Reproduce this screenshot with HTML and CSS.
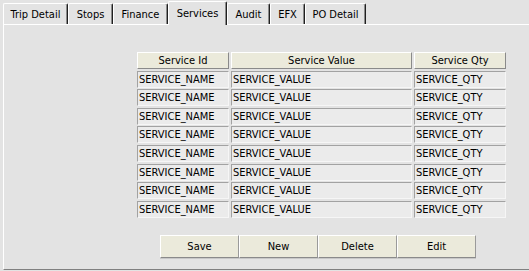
FILE: index.html
```html
<!DOCTYPE html>
<html>
<head>
<meta charset="utf-8">
<link rel="stylesheet" href="styles.css">
</head>
<body>
<div class="tabs">
  <div class="tab w-trip">Trip Detail</div>
  <div class="tab w-stops">Stops</div>
  <div class="tab w-fin">Finance</div>
  <div class="tab w-serv active">Services</div>
  <div class="tab w-audit">Audit</div>
  <div class="tab w-efx">EFX</div>
  <div class="tab w-po">PO Detail</div>
</div>
<div class="panel">
  <div class="grid">
    <div class="hd">Service Id</div>
    <div class="hd">Service Value</div>
    <div class="hd">Service Qty</div>
    <div class="cell">SERVICE_NAME</div><div class="cell">SERVICE_VALUE</div><div class="cell">SERVICE_QTY</div>
    <div class="cell">SERVICE_NAME</div><div class="cell">SERVICE_VALUE</div><div class="cell">SERVICE_QTY</div>
    <div class="cell">SERVICE_NAME</div><div class="cell">SERVICE_VALUE</div><div class="cell">SERVICE_QTY</div>
    <div class="cell">SERVICE_NAME</div><div class="cell">SERVICE_VALUE</div><div class="cell">SERVICE_QTY</div>
    <div class="cell">SERVICE_NAME</div><div class="cell">SERVICE_VALUE</div><div class="cell">SERVICE_QTY</div>
    <div class="cell">SERVICE_NAME</div><div class="cell">SERVICE_VALUE</div><div class="cell">SERVICE_QTY</div>
    <div class="cell">SERVICE_NAME</div><div class="cell">SERVICE_VALUE</div><div class="cell">SERVICE_QTY</div>
    <div class="cell">SERVICE_NAME</div><div class="cell">SERVICE_VALUE</div><div class="cell">SERVICE_QTY</div>
  </div>
  <div class="buttons">
    <div class="btn">Save</div>
    <div class="btn">New</div>
    <div class="btn">Delete</div>
    <div class="btn">Edit</div>
  </div>
</div>
</body>
</html>
```
FILE: styles.css
```css
html, body {
  margin: 0;
  padding: 0;
  background: #e3e3e3;
  font-family: "DejaVu Sans Condensed", "DejaVu Sans", sans-serif;
  font-size: 11px;
  color: #000;
  overflow: hidden;
}
.tabs {
  display: flex;
  align-items: flex-end;
  height: 24px;
  padding-left: 3px;
  position: relative;
  z-index: 2;
}
.tab {
  box-sizing: border-box;
  height: 21px;
  padding-top: 4px;
  text-align: center;
  border-top: 1px solid #fff;
  border-left: 1px solid #fff;
  border-right: 1px solid #202020;
  box-shadow: inset -1px 0 #8a8a8a;
  border-radius: 2px 2px 0 0;
  white-space: nowrap;
}
.w-trip { width: 65px; }
.w-stops { width: 45px; }
.w-fin { width: 55px; }
.w-serv { width: 59px; }
.w-audit { width: 43px; }
.w-efx { width: 35px; }
.w-po { width: 61px; }
.tab.active {
  height: 24px;
  margin-bottom: -1px;
  padding-top: 5px;
  background: #e3e3e3;
}
.panel {
  box-sizing: border-box;
  margin-left: 3px;
  width: 526px;
  height: 246px;
  border-top: 1px solid #fff;
  border-left: 1px solid #fff;
  border-bottom: 1px solid #808080;
  box-shadow: 0 1px 0 #303030;
  padding: 27px 0 0 133px;
}
.grid {
  display: grid;
  grid-template-columns: 92px 181px 92px;
  column-gap: 2px;
  grid-auto-rows: 17px;
  row-gap: 1.6px;
  width: 368px;
}
.hd {
  box-sizing: border-box;
  background: #ebeadb;
  border-top: 1px solid #fff;
  border-left: 1px solid #fff;
  border-right: 1px solid #8a8a8a;
  border-bottom: 1px solid #8a8a8a;
  text-align: center;
  line-height: 15px;
}
.cell {
  box-sizing: border-box;
  background: #ebebeb;
  border-top: 1px solid #a2a2a2;
  border-left: 1px solid #a2a2a2;
  border-right: 1px solid #f6f6f6;
  border-bottom: 1px solid #f6f6f6;
  padding-left: 1px;
  line-height: 15px;
  white-space: nowrap;
  overflow: hidden;
}
.buttons {
  display: flex;
  margin: 17px 0 0 23px;
}
.btn {
  box-sizing: border-box;
  width: 79px;
  height: 23px;
  background: #ebeadb;
  border-top: 1px solid #fff;
  border-left: 1px solid #fff;
  border-right: 1px solid #9a9a9a;
  border-bottom: 1px solid #8a8a8a;
  box-shadow: 0 1px 0 #c8c8c8;
  text-align: center;
  line-height: 21px;
}
```
